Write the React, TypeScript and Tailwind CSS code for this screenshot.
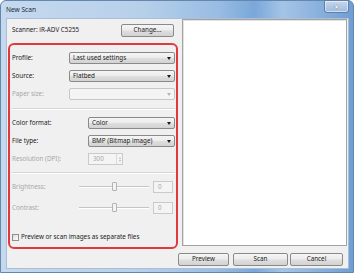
import React from "react";

function Arrow({ disabled }: { disabled?: boolean }) {
  return (
    <span
      className={
        "w-0 h-0 border-l-[2.5px] border-r-[2.5px] border-t-[3px] border-l-transparent border-r-transparent " +
        (disabled ? "border-t-[#b4b4b4]" : "border-t-[#1a1a1a]")
      }
    />
  );
}

function Combo({ value, disabled }: { value?: string; disabled?: boolean }) {
  if (disabled) {
    return (
      <div className="flex-1 h-[12px] flex items-center justify-between pl-[3px] pr-[3px] rounded-[2px] border border-[#c7c7c7] bg-[#f4f4f4]">
        <span>{value}</span>
        <Arrow disabled />
      </div>
    );
  }
  return (
    <div className="flex-1 h-[12px] flex items-center justify-between pl-[3px] pr-[3px] rounded-[2px] border border-[#8a8a8a] bg-[linear-gradient(#f5f5f5_0%,#ececec_48%,#dfdfdf_52%,#d2d2d2_100%)]">
      <span className="text-[#1b1b1b]">{value}</span>
      <Arrow />
    </div>
  );
}

function Row({
  label,
  labelWidth,
  disabled,
  className,
  children,
}: {
  label: string;
  labelWidth: string;
  disabled?: boolean;
  className?: string;
  children: React.ReactNode;
}) {
  return (
    <div className={"flex items-center h-[12px] " + (className ?? "")}>
      <span className={labelWidth + " shrink-0 " + (disabled ? "text-[#a8a8a8]" : "text-[#1b1b1b]")}>{label}</span>
      {children}
    </div>
  );
}

function Separator({ className }: { className?: string }) {
  return (
    <div className={"flex flex-col " + (className ?? "")}>
      <div className="h-[1px] bg-[#d5d5d5]" />
      <div className="h-[1px] bg-white" />
    </div>
  );
}

function Slider() {
  return (
    <div className="w-[70px] h-[12px] relative flex items-center">
      <div className="w-full flex flex-col">
        <div className="h-[1px] bg-[#c4c4c4]" />
        <div className="h-[1px] bg-white" />
      </div>
      <div className="absolute left-[33px] top-[1px] w-[5px] h-[9px] rounded-[1px] border border-[#b3b3b3] bg-[#f3f3f3]" />
    </div>
  );
}

function ValueBox() {
  return (
    <div className="ml-[4px] w-[20px] h-[12px] flex items-center pl-[4px] border border-[#cacaca] bg-[#f4f4f4] text-[#a8a8a8]">
      0
    </div>
  );
}

function Button({ label, width }: { label: string; width: string }) {
  return (
    <div
      className={
        width +
        " h-[13px] flex items-center justify-center rounded-[2px] border border-[#8a8a8a] bg-[linear-gradient(#f5f5f5_0%,#ececec_48%,#dfdfdf_52%,#d2d2d2_100%)] text-[#1b1b1b]"
      }
    >
      {label}
    </div>
  );
}

export default function App() {
  return (
    <div className="w-[356px] h-[277px] bg-white font-['Noto_Sans',sans-serif] text-[6.3px] leading-none">
      <div className="w-[354px] h-[273px] rounded-t-[6px] border border-[#6586ad] bg-[linear-gradient(90deg,#c5d9ee_0%,#b7d0ea_40%,#98bce3_62%,#7aa7d9_72%,#a4c4e7_80%,#6f9ed3_100%)] flex flex-col pl-[5px] pr-[4px] pb-[3px]">
        <div className="h-[17px] flex items-start justify-between">
          <span className="mt-[6px] text-[6.6px] text-[#1c2c40]">New Scan</span>
          <div className="w-[25px] h-[13px] -mt-[1px] rounded-b-[3px] border border-[#5f7fa6] bg-[linear-gradient(#c6d8ec,#9cbbe0)] flex items-center justify-center shadow-[inset_0_0_0_1px_rgba(255,255,255,0.5)]">
            <span className="text-[8px] font-bold text-white [text-shadow:0_0_1px_#333]">×</span>
          </div>
        </div>
        <div className="flex-1 bg-[#f0f0f0] border border-[#a9bfd8] flex flex-col">
          <div className="h-[230px] flex">
            <div className="ml-[1px] w-[171px] flex flex-col">
              <div className="h-[14px] mt-[4px] mb-[6px] flex items-center justify-between pl-[4px] pr-[5px]">
                <span className="text-[#1b1b1b]">Scanner: iR-ADV C5255</span>
                <Button label="Change..." width="w-[53px]" />
              </div>
              <div className="w-[170px] h-[206px] rounded-[6px] border-2 border-[#e2393f] pt-[7px] pl-[2px] pr-[1px] flex flex-col">
                <Row label="Profile:" labelWidth="w-[57px]">
                  <Combo value="Last used settings" />
                </Row>
                <Row label="Source:" labelWidth="w-[57px]" className="mt-[6px]">
                  <Combo value="Flatbed" />
                </Row>
                <Row label="Paper size:" labelWidth="w-[57px]" className="mt-[6px]" disabled>
                  <Combo disabled />
                </Row>
                <Separator className="mt-[8px]" />
                <Row label="Color format:" labelWidth="w-[76px]" className="mt-[7px]">
                  <Combo value="Color" />
                </Row>
                <Row label="File type:" labelWidth="w-[76px]" className="mt-[6px]">
                  <Combo value="BMP (Bitmap image)" />
                </Row>
                <Row label="Resolution (DPI):" labelWidth="w-[76px]" className="mt-[6px]" disabled>
                  <div className="w-[35px] h-[12px] flex items-center justify-between pl-[4px] border border-[#cacaca] bg-[#f4f4f4] text-[#a8a8a8]">
                    <span>300</span>
                    <div className="w-[6px] h-full flex flex-col items-center justify-center gap-[1px] border-l border-[#dadada]">
                      <span className="w-0 h-0 border-l-[1.5px] border-r-[1.5px] border-b-[2px] border-l-transparent border-r-transparent border-b-[#b8b8b8]" />
                      <span className="w-0 h-0 border-l-[1.5px] border-r-[1.5px] border-t-[2px] border-l-transparent border-r-transparent border-t-[#b8b8b8]" />
                    </div>
                  </div>
                </Row>
                <Separator className="mt-[7px]" />
                <Row label="Brightness:" labelWidth="w-[67px]" className="mt-[7px]" disabled>
                  <Slider />
                  <ValueBox />
                </Row>
                <Row label="Contrast:" labelWidth="w-[67px]" className="mt-[9px]" disabled>
                  <Slider />
                  <ValueBox />
                </Row>
                <div className="mt-[19px] h-[8px] flex items-center">
                  <div className="w-[7px] h-[7px] border border-[#8f8f8f] bg-[linear-gradient(135deg,#dcdcdc,#ffffff)]" />
                  <span className="ml-[2px] text-[#1b1b1b]">Preview or scan images as separate files</span>
                </div>
              </div>
            </div>
            <div className="ml-[3px] mr-[1px] flex-1 h-[227px] border border-[#a3a3a3] bg-white shadow-[inset_1px_1px_0_#e2e2e2]" />
          </div>
          <div className="pt-[4px] pr-[5px] flex justify-end">
            <Button label="Preview" width="w-[51px]" />
            <div className="w-[4px]" />
            <Button label="Scan" width="w-[55px]" />
            <div className="w-[2px]" />
            <Button label="Cancel" width="w-[53px]" />
          </div>
        </div>
      </div>
    </div>
  );
}
